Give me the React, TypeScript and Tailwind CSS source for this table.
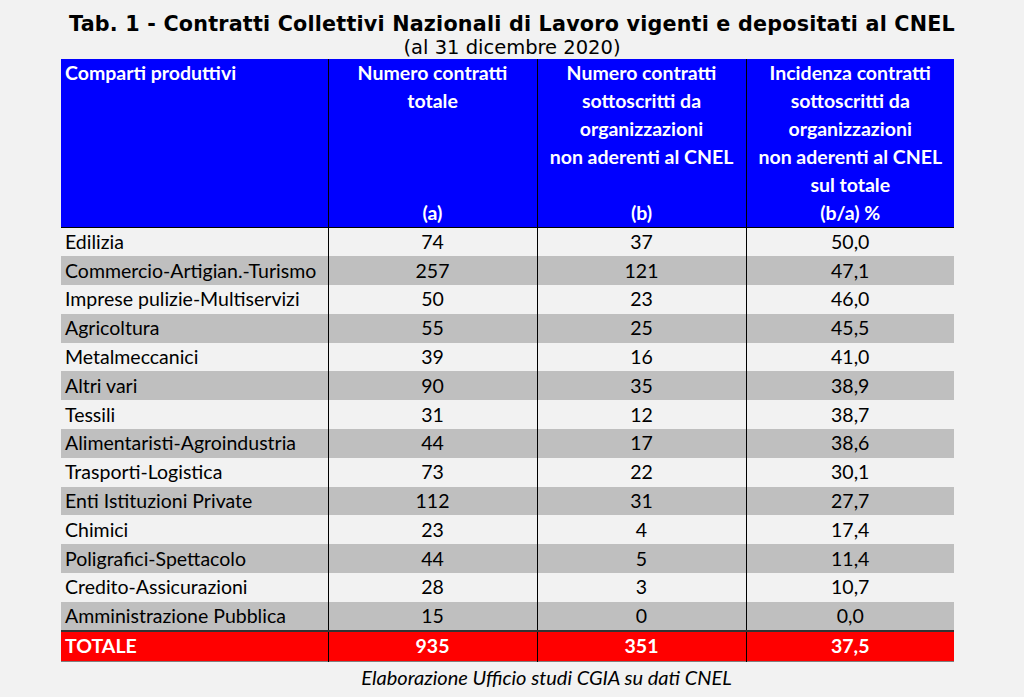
const rows: [string, string, string, string][] = [
  ["Edilizia", "74", "37", "50,0"],
  ["Commercio-Artigian.-Turismo", "257", "121", "47,1"],
  ["Imprese pulizie-Multiservizi", "50", "23", "46,0"],
  ["Agricoltura", "55", "25", "45,5"],
  ["Metalmeccanici", "39", "16", "41,0"],
  ["Altri vari", "90", "35", "38,9"],
  ["Tessili", "31", "12", "38,7"],
  ["Alimentaristi-Agroindustria", "44", "17", "38,6"],
  ["Trasporti-Logistica", "73", "22", "30,1"],
  ["Enti Istituzioni Private", "112", "31", "27,7"],
  ["Chimici", "23", "4", "17,4"],
  ["Poligrafici-Spettacolo", "44", "5", "11,4"],
  ["Credito-Assicurazioni", "28", "3", "10,7"],
  ["Amministrazione Pubblica", "15", "0", "0,0"],
];

function HeaderCell({ lines, align = "center" }: { lines: string[]; align?: "left" | "center" }) {
  return (
    <th
      className={`p-0 align-top font-bold border-r border-black last:border-r-0 ${
        align === "left" ? "text-left pl-[4px]" : "text-center"
      }`}
    >
      {lines.map((l, i) => (
        <div key={i} className="h-[28px] leading-[28px] whitespace-nowrap">
          {l || "\u00a0"}
        </div>
      ))}
    </th>
  );
}

export default function App() {
  return (
    <div className="w-[1024px] h-[697px] bg-[#f2f2f2] overflow-hidden text-black">
      <div className="pt-[10px] text-center font-['DejaVu_Sans',sans-serif]">
        <h1 className="text-[20.7px] font-bold leading-[28px] tracking-[0.2px]">
          Tab. 1 - Contratti Collettivi Nazionali di Lavoro vigenti e depositati al CNEL
        </h1>
        <p className="text-[19.5px] leading-[22px] -mt-[1px]">(al 31 dicembre 2020)</p>
      </div>

      <table className="ml-[61px] border-collapse table-fixed w-[893px] font-['Lato',sans-serif] text-[19.5px] leading-[20px]">
        <colgroup>
          <col className="w-[267px]" />
          <col className="w-[209px]" />
          <col className="w-[209px]" />
          <col className="w-[208px]" />
        </colgroup>
        <thead>
          <tr className="bg-[#0000ff] text-white border-b border-black">
            <HeaderCell align="left" lines={["Comparti produttivi", "", "", "", "", ""]} />
            <HeaderCell lines={["Numero contratti", "totale", "", "", "", "(a)"]} />
            <HeaderCell
              lines={["Numero contratti", "sottoscritti da", "organizzazioni", "non aderenti al CNEL", "", "(b)"]}
            />
            <HeaderCell
              lines={[
                "Incidenza contratti",
                "sottoscritti da",
                "organizzazioni",
                "non aderenti al CNEL",
                "sul totale",
                "(b/a) %",
              ]}
            />
          </tr>
        </thead>
        <tbody>
          {rows.map((r, i) => (
            <tr key={r[0]} className={i % 2 === 1 ? "bg-[#bfbfbf]" : "bg-[#f2f2f2]"}>
              <td className="p-0 h-[28.8px] pl-[4px] border-r border-black whitespace-nowrap">{r[0]}</td>
              <td className="p-0 h-[28.8px] text-center border-r border-black">{r[1]}</td>
              <td className="p-0 h-[28.8px] text-center border-r border-black">{r[2]}</td>
              <td className="p-0 h-[28.8px] text-center">{r[3]}</td>
            </tr>
          ))}
          <tr className="bg-[#ff0000] text-white font-bold border-t-2 border-[#333] border-b border-b-[#7f7f7f]">
            <td className="p-0 h-[31px] pl-[4px] border-r border-black">TOTALE</td>
            <td className="p-0 h-[31px] text-center border-r border-black">935</td>
            <td className="p-0 h-[31px] text-center border-r border-black">351</td>
            <td className="p-0 h-[31px] text-center">37,5</td>
          </tr>
        </tbody>
      </table>

      <p className="mt-[3px] pl-[69px] text-center font-['Lato',sans-serif] italic text-[20px] leading-[24px]">
        Elaborazione Ufficio studi CGIA su dati CNEL
      </p>
    </div>
  );
}
